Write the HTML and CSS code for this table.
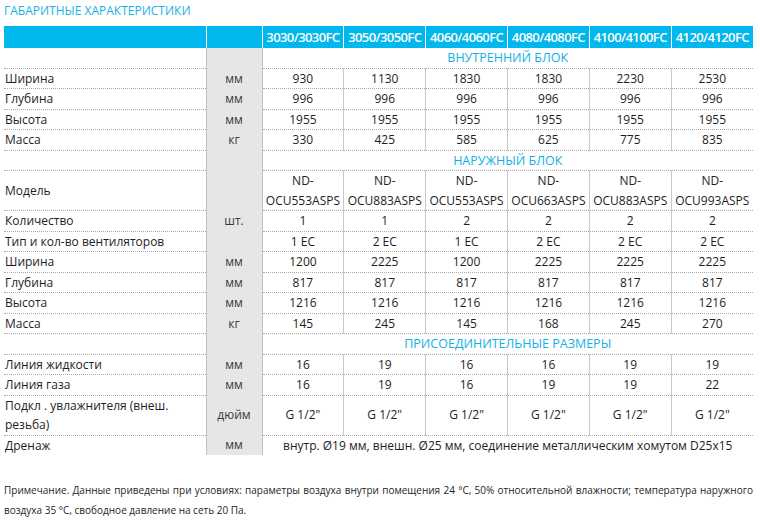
FILE: index.html
```html
<!DOCTYPE html>
<html lang="ru">
<head>
<meta charset="utf-8">
<title>Габаритные характеристики</title>
<link rel="stylesheet" href="styles.css">
</head>
<body>
<div class="page">
  <h1 class="title">ГАБАРИТНЫЕ ХАРАКТЕРИСТИКИ</h1>
  <table class="spec">
    <colgroup>
      <col class="c-label">
      <col class="c-unit">
      <col span="6" class="c-data">
    </colgroup>
    <thead>
      <tr>
        <th></th><th></th>
        <th>3030/3030FC</th><th>3050/3050FC</th><th>4060/4060FC</th><th>4080/4080FC</th><th>4100/4100FC</th><th>4120/4120FC</th>
      </tr>
    </thead>
    <tbody>
      <tr class="section"><td class="label"></td><td class="unit"></td><td colspan="6" class="sec">ВНУТРЕННИЙ БЛОК</td></tr>
      <tr class="row"><td class="label">Ширина</td><td class="unit">мм</td><td>930</td><td>1130</td><td>1830</td><td>1830</td><td>2230</td><td>2530</td></tr>
      <tr class="row"><td class="label">Глубина</td><td class="unit">мм</td><td>996</td><td>996</td><td>996</td><td>996</td><td>996</td><td>996</td></tr>
      <tr class="row"><td class="label">Высота</td><td class="unit">мм</td><td>1955</td><td>1955</td><td>1955</td><td>1955</td><td>1955</td><td>1955</td></tr>
      <tr class="row"><td class="label">Масса</td><td class="unit">кг</td><td>330</td><td>425</td><td>585</td><td>625</td><td>775</td><td>835</td></tr>

      <tr class="section"><td class="label"></td><td class="unit"></td><td colspan="6" class="sec">НАРУЖНЫЙ БЛОК</td></tr>
      <tr class="row"><td class="label">Модель</td><td class="unit"></td><td>ND-<br>OCU553ASPS</td><td>ND-<br>OCU883ASPS</td><td>ND-<br>OCU553ASPS</td><td>ND-<br>OCU663ASPS</td><td>ND-<br>OCU883ASPS</td><td>ND-<br>OCU993ASPS</td></tr>
      <tr class="row"><td class="label">Количество</td><td class="unit">шт.</td><td>1</td><td>1</td><td>2</td><td>2</td><td>2</td><td>2</td></tr>
      <tr class="row"><td class="label">Тип и кол-во вентиляторов</td><td class="unit"></td><td>1 EC</td><td>2 EC</td><td>1 EC</td><td>2 EC</td><td>2 EC</td><td>2 EC</td></tr>
      <tr class="row"><td class="label">Ширина</td><td class="unit">мм</td><td>1200</td><td>2225</td><td>1200</td><td>2225</td><td>2225</td><td>2225</td></tr>
      <tr class="row"><td class="label">Глубина</td><td class="unit">мм</td><td>817</td><td>817</td><td>817</td><td>817</td><td>817</td><td>817</td></tr>
      <tr class="row"><td class="label">Высота</td><td class="unit">мм</td><td>1216</td><td>1216</td><td>1216</td><td>1216</td><td>1216</td><td>1216</td></tr>
      <tr class="row"><td class="label">Масса</td><td class="unit">кг</td><td>145</td><td>245</td><td>145</td><td>168</td><td>245</td><td>270</td></tr>

      <tr class="section"><td class="label"></td><td class="unit"></td><td colspan="6" class="sec">ПРИСОЕДИНИТЕЛЬНЫЕ РАЗМЕРЫ</td></tr>
      <tr class="row"><td class="label">Линия жидкости</td><td class="unit">мм</td><td>16</td><td>19</td><td>16</td><td>16</td><td>19</td><td>19</td></tr>
      <tr class="row"><td class="label">Линия газа</td><td class="unit">мм</td><td>16</td><td>19</td><td>16</td><td>19</td><td>19</td><td>22</td></tr>
      <tr class="row"><td class="label">Подкл . увлажнителя (внеш. резьба)</td><td class="unit">дюйм</td><td>G 1/2"</td><td>G 1/2"</td><td>G 1/2"</td><td>G 1/2"</td><td>G 1/2"</td><td>G 1/2"</td></tr>
      <tr class="last"><td class="label">Дренаж</td><td class="unit">мм</td><td colspan="6" class="wide">внутр. Ø19 мм, внешн. Ø25 мм, соединение металлическим хомутом D25x15</td></tr>
    </tbody>
  </table>
  <div class="note">
    <span class="note-line just">Примечание. Данные приведены при условиях: параметры воздуха внутри помещения 24 °C, 50% относительной влажности; температура наружного</span>
    <span class="note-line">воздуха 35 °C, свободное давление на сеть 20 Па.</span>
  </div>
</div>
</body>
</html>
```

FILE: styles.css
```css
html, body {
  margin: 0;
  padding: 0;
  background: #ffffff;
}

body {
  font-family: "Open Sans", "Noto Sans", "DejaVu Sans", sans-serif;
  color: #1e1e1e;
}

.page {
  padding: 2px 4px 0 4px;
  width: 749px;
}

.title {
  margin: 0 0 6px 0;
  font-size: 12px;
  line-height: 18px;
  font-weight: 400;
  color: #1ab0e6;
}

.spec {
  border-collapse: collapse;
  table-layout: fixed;
  width: 749px;
  font-size: 12px;
}

.c-label { width: 202px; }
.c-unit { width: 56px; }

.spec th {
  height: 22px;
  padding: 0;
  background: #00b7ee;
  color: #ffffff;
  font-size: 13px;
  font-weight: 600;
  letter-spacing: -0.6px;
  text-align: center;
  white-space: nowrap;
  border-right: 1px solid #ffffff;
}

.spec th:last-child {
  border-right: none;
}

.spec td {
  padding: 0;
  line-height: 19.5px;
  text-align: center;
  vertical-align: middle;
  border-bottom: 1px dotted #ababab;
}

.spec td.label {
  text-align: left;
  padding-left: 1px;
}

.spec td.unit {
  background: #e6e6e6;
  color: #3a3a3a;
  border-left: 1px solid #c2c2c2;
  border-right: 1px solid #c2c2c2;
  border-bottom: none;
}

.spec tr.row td:nth-child(n+4) {
  border-left: 1px solid #c8c8c8;
}

.spec td.sec {
  color: #14b0e8;
  font-size: 12.5px;
}

.spec tr.last td {
  border-bottom: none;
}

.note {
  margin-top: 25px;
  font-size: 10px;
  line-height: 20px;
  color: #1e1e1e;
}

.note-line {
  display: block;
  text-align: left;
}

.note-line.just {
  text-align: justify;
  text-align-last: justify;
}
```
